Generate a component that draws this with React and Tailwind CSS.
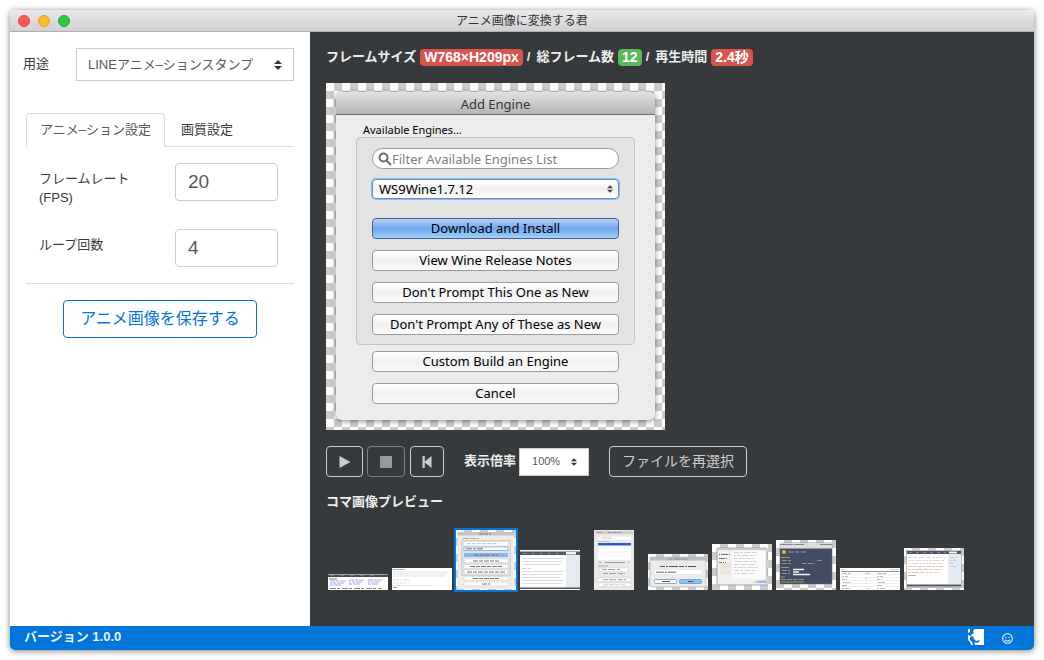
import { useState } from "react";
import { FaRegSmile } from "react-icons/fa";

const BORDER_BUTTON = "flex h-[31px] items-center justify-center rounded-[4px] border";

const SelectArrows = ({ className }) => (
    <svg viewBox="0 0 8 10" className={className} fill="currentColor" aria-hidden="true">
        <path d="M4 0 L8 4 H0 Z" />
        <path d="M4 10 L0 6 H8 Z" />
    </svg>
);

const TitleBar = () => (
    <header className="relative flex h-[22px] shrink-0 items-center justify-center border-b border-[#b1afb1] bg-linear-to-b from-[#ebe9eb] to-[#d1cfd1]">
        <div className="absolute left-2 flex gap-2">
            <button aria-label="閉じる" className="size-3 rounded-full border border-[#e0443e] bg-[#fc5b57]" />
            <button aria-label="最小化" className="size-3 rounded-full border border-[#dea123] bg-[#fdbe2e]" />
            <button aria-label="拡大" className="size-3 rounded-full border border-[#1aab29] bg-[#28c940]" />
        </div>
        <h1 className="text-[12px] text-[#333]">アニメ画像に変換する君</h1>
    </header>
);

const NumberField = ({ id, label, value, onChange }) => (
    <div className="flex h-[38px] items-start justify-between pr-4 pl-[13px]">
        <label htmlFor={id} className="pt-1.5 text-[13px] leading-[19px] whitespace-pre-line">
            {label}
        </label>
        <input
            id={id}
            type="text"
            inputMode="numeric"
            value={value}
            onChange={(e) => onChange(e.target.value)}
            className="h-[38px] w-[103px] rounded-[4px] border border-[#ccc] bg-white px-3 text-[19px] text-[#55595c]"
        />
    </div>
);

const Sidebar = () => {
    const [fps, setFps] = useState("20");
    const [loop, setLoop] = useState("4");

    return (
        <aside className="w-[300px] shrink-0 bg-white pt-4 pr-4 text-[13px] text-[#373a3c]">
            <div className="flex items-center pl-[13px]">
                <label htmlFor="usage" className="w-[53px] shrink-0 pb-0.5">用途</label>
                <div className="relative flex-1">
                    <select
                        id="usage"
                        className="h-[33px] w-full appearance-none border border-[#ccc] bg-white pr-8 pl-[11px] text-[#55595c]"
                    >
                        <option>LINEアニメ–ションスタンプ</option>
                        <option>webページアニメ–ション</option>
                    </select>
                    <SelectArrows className="pointer-events-none absolute top-3 right-3 h-2.5 w-2 text-[#333]" />
                </div>
            </div>

            <div className="mt-8 pl-4">
                <div role="tablist" className="flex h-[34px] border-b border-[#ddd]">
                    <button
                        role="tab"
                        aria-selected="true"
                        className="-mb-px h-[34px] rounded-t-[4px] border border-[#ddd] border-b-white bg-white px-[13px] text-[#55595c]"
                    >
                        アニメ–ション設定
                    </button>
                    <button role="tab" aria-selected="false" className="px-4">
                        画質設定
                    </button>
                </div>

                <div className="mt-4 flex flex-col gap-7 border-b border-[#ddd] pb-4">
                    <NumberField id="fps" label={"フレームレート\n(FPS)"} value={fps} onChange={setFps} />
                    <NumberField id="loop" label="ループ回数" value={loop} onChange={setLoop} />
                </div>

                <div className="mt-4 flex justify-center">
                    <button className="h-[38px] rounded-[4px] border border-[#0275d8] px-4 text-[16px] text-[#0275d8]">
                        アニメ画像を保存する
                    </button>
                </div>
            </div>
        </aside>
    );
};

const Badge = ({ className, children }) => (
    <span className={`rounded-[4px] px-1 text-[14px] leading-[17px] font-bold text-white ${className}`}>
        {children}
    </span>
);

const EngineButton = ({ primary, children }) => (
    <button
        className={
            primary
                ? "h-[21px] rounded-[4px] border border-[#4a5c9c] bg-linear-to-b from-[#b9d0f3] via-[#6fa6ee] to-[#a4d2fb] leading-[19px]"
                : "h-[21px] rounded-[4px] border border-[#9a9a9a] bg-linear-to-b from-white via-[#f0f0f0] to-[#fbfbfb] leading-[19px]"
        }
    >
        {children}
    </button>
);

const FramePreview = () => (
    <div className="w-[339px] bg-[conic-gradient(#cbcbcb_25%,#fff_0_50%,#cbcbcb_0_75%,#fff_0)] bg-[length:16px_16px] px-2.5 pt-[9px] pb-2.5">
        <div className="h-[328px] overflow-hidden rounded-[6px] bg-[#ececec] font-['Noto_Sans','Open_Sans',sans-serif] text-[13px] text-black shadow-[0_1px_5px_rgba(0,0,0,0.5)]">
            <div className="h-[23px] border-b border-[#6e6e6e] bg-linear-to-b from-[#e2e2e2] to-[#b4b4b4] text-center leading-6 text-[#333]">
                Add Engine
            </div>
            <div className="px-5 pt-[7px]">
                <div className="pl-[7px] text-[11px] leading-[15px]">Available Engines…</div>
                <div className="flex flex-col gap-[11px] rounded-[4px] border border-[#c4c4c4] bg-[#e3e3e3] px-[15px] pt-2.5 pb-[9px]">
                    <div className="relative">
                        <svg viewBox="0 0 14 14" className="absolute top-1 left-1.5 size-3.5" fill="none" stroke="#6b6b6b" strokeWidth="2" aria-hidden="true">
                            <circle cx="5.5" cy="5.5" r="4" />
                            <path d="M8.5 8.5 L13 13" />
                        </svg>
                        <input
                            type="text"
                            aria-label="Filter Available Engines List"
                            placeholder="Filter Available Engines List"
                            className="block h-[21px] w-full rounded-full border border-[#999] bg-white pl-[19px] placeholder:text-[#808080]"
                        />
                    </div>
                    <div className="relative -mt-px mb-2">
                        <select
                            aria-label="Engine"
                            className="block h-5 w-full appearance-none rounded-[4px] border border-[#5b93d0] bg-linear-to-b from-white via-[#efefef] to-white pl-1.5 leading-[18px] ring-1 ring-[#8fb9e6]"
                        >
                            <option>WS9Wine1.7.12</option>
                        </select>
                        <SelectArrows className="pointer-events-none absolute top-[5px] right-1.5 h-2.5 w-1.5 text-[#444]" />
                    </div>
                    <EngineButton primary>Download and Install</EngineButton>
                    <EngineButton>View Wine Release Notes</EngineButton>
                    <EngineButton>Don't Prompt This One as New</EngineButton>
                    <EngineButton>Don't Prompt Any of These as New</EngineButton>
                </div>
                <div className="mt-1.5 flex flex-col gap-[11px] px-4">
                    <EngineButton>Custom Build an Engine</EngineButton>
                    <EngineButton>Cancel</EngineButton>
                </div>
            </div>
        </div>
    </div>
);

const PlayerControls = () => (
    <div className="mt-4 flex items-center">
        <button aria-label="再生" className={`${BORDER_BUTTON} w-[37px] border-[#ccc]`}>
            <svg viewBox="0 0 12 12" className="size-3" fill="#ccc">
                <path d="M0.5 0 L11.5 6 L0.5 12 Z" />
            </svg>
        </button>
        <button aria-label="停止" disabled className={`${BORDER_BUTTON} ml-1 w-[38px] border-[#7d7f80]`}>
            <svg viewBox="0 0 12 12" className="size-3" fill="#999">
                <path d="M0 0 H12 V12 H0 Z" />
            </svg>
        </button>
        <button aria-label="最初に戻る" className={`${BORDER_BUTTON} ml-[5px] w-[34px] border-[#ccc]`}>
            <svg viewBox="0 0 10 12" className="h-3 w-2.5" fill="#ccc">
                <path d="M0.5 0 H2.8 V5.6 L9.5 0 V12 L2.8 6.4 V12 H0.5 Z" />
            </svg>
        </button>
        <label htmlFor="zoom" className="ml-5 pb-0.5 text-[13px] font-bold">表示倍率</label>
        <div className="relative ml-[3px]">
            <select
                id="zoom"
                className="block h-7 w-[70px] appearance-none border border-[#ccc] bg-white pl-3 text-[11px] text-[#55595c]"
            >
                <option>100%</option>
                <option>50%</option>
            </select>
            <SelectArrows className="pointer-events-none absolute top-2.5 right-3 h-2 w-1.5 text-[#333]" />
        </div>
        <button className={`${BORDER_BUTTON} ml-5 border-[#ccc] px-3 text-[14px] text-[#ccc]`}>
            ファイルを再選択
        </button>
    </div>
);

// rows of short strokes that stand for text at thumbnail size
const Rows = ({ x, y, width, count, step = 3, color = "#ccc", dash = "5 1 3 1 7 1" }) =>
    Array.from({ length: count }, (_, i) => (
        <path
            key={i}
            d={`M${x} ${y + i * step} h${width - ((i * 7) % 5)}`}
            stroke={color}
            strokeWidth="0.8"
            strokeDasharray={dash}
            strokeDashoffset={i * 3}
        />
    ));

const THUMBS = [
    {
        width: 60,
        height: 16,
        art: (
            <>
                <path d="M0 0 H60 V16 H0 Z" fill="#fff" />
                <path d="M0 0.5 H60 V3 H0 Z" fill="#4a4a4e" />
                <path d="M2 1.5 H50" stroke="#777" strokeDasharray="4 6" />
                <path d="M1 5 H9" stroke="#555" strokeWidth="0.8" />
                <Rows x={2} y={7} width={16} count={3} step={2} color="#9090ee" />
                <Rows x={21} y={6} width={15} count={3} step={2} color="#9090ee" />
                <Rows x={40} y={6} width={14} count={3} step={2} color="#9090ee" />
                <path d="M2 14.5 H54" stroke="#666" strokeWidth="0.8" strokeDasharray="6 1 3 2" />
            </>
        ),
    },
    {
        width: 60,
        height: 22,
        art: (
            <>
                <path d="M0 0 H60 V22 H0 Z" fill="#fff" />
                <path d="M1 1.5 H13" stroke="#999" strokeWidth="0.8" />
                <Rows x={1} y={4} width={56} count={3} step={2} color="#dcdcdc" dash="none" />
                <Rows x={1} y={12} width={18} count={2} step={3} color="#d4d4d4" />
                <path d="M1 17.5 H40" stroke="#e4e4e4" />
                <path d="M1 19.5 H5" stroke="#999" />
            </>
        ),
    },
    {
        width: 60,
        height: 60,
        checker: true,
        art: (
            <>
                <rect x="1.5" y="2" width="57" height="57" rx="1" fill="#ececec" />
                <path d="M1.5 2 H58.5 V5.5 H1.5 Z" fill="#c4c4c4" />
                <path d="M23 4 H35" stroke="#777" strokeWidth="0.9" strokeDasharray="4 1" />
                <path d="M7 8.5 H23" stroke="#999" strokeWidth="0.8" strokeDasharray="6 1" />
                <rect x="5.5" y="10.5" width="49" height="35" fill="#e2e2e2" stroke="#d0d0d0" />
                <rect x="8" y="12" width="44" height="3.5" rx="1.5" fill="#fff" />
                <path d="M11 13.7 H42" stroke="#bbb" strokeWidth="0.9" strokeDasharray="4 1" />
                <rect x="8" y="17" width="44" height="3.5" fill="#fff" stroke="#8fb9e0" />
                <path d="M10 18.8 H27" stroke="#556" strokeWidth="0.9" strokeDasharray="6 1 3 1" />
                <path d="M8 23 H52 V27 H8 Z" fill="#8ab4ee" />
                {[29, 34.5, 40, 46.5, 52].map((y) => (
                    <path key={y} d={`M8 ${y} h44 v3.8 h-44 Z`} fill="#fff" stroke="#ccc" strokeWidth="0.5" />
                ))}
                <path d="M18 25 H42 M17 31 H43 M14 36.5 H46 M11 42 H49 M17 48.5 H43 M26 54 H34" stroke="#777" strokeDasharray="5 1 4 1" />
            </>
        ),
    },
    {
        width: 60,
        height: 40,
        art: (
            <>
                <path d="M0 0 H60 V40 H0 Z" fill="#fff" />
                <path d="M0 1.5 H60 V5 H0 Z" fill="#4b5563" />
                <path d="M3 3.5 H44" stroke="#7d8794" strokeDasharray="4 4" />
                <path d="M46 2 H56 V4.5 H46 Z" fill="#f4f4f4" />
                <path d="M46 5 H60 V38 H46 Z" fill="#e6ebf2" />
                <Rows x={2} y={8.5} width={42} count={3} color="#d4d4d4" dash="none" />
                <Rows x={2} y={18.5} width={10} count={1} />
                <Rows x={2} y={21.5} width={42} count={5} color="#d4d4d4" dash="none" />
                <path d="M0 37.5 H60 V39 H0 Z" fill="#4b5563" />
            </>
        ),
    },
    {
        width: 40,
        height: 60,
        art: (
            <>
                <path d="M0 0 H40 V60 H0 Z" fill="#e9e9e9" />
                <path d="M1 1 H39 V4 H1 Z" fill="#cfcfcf" />
                <path d="M3 2.5 H8" stroke="#e48a7c" />
                <path d="M14 2.5 H27" stroke="#888" strokeWidth="0.8" strokeDasharray="4 1" />
                <path d="M4 6.5 H37 V9.5 H4 Z" fill="#fff" />
                <path d="M7 8 H18 M4 11.5 H16" stroke="#bbb" strokeWidth="0.8" />
                <path d="M4 13 H37 V30 H4 Z" fill="#fff" />
                <path d="M4 13 H37 V15.5 H4 Z" fill="#315bc0" />
                <path d="M4 18 H37 M4 22 H37 M4 26 H37" stroke="#eef3fb" />
                <path d="M5 32.5 H35" stroke="#888" strokeWidth="0.8" strokeDasharray="2 4 20 3" />
                <path d="M4 36 H14" stroke="#999" strokeWidth="0.8" />
                <path d="M6 38 H34 V41.5 H6 Z M4 48 H37 V51.5 H4 Z M4 53 H37 V56.5 H4 Z" fill="#fff" stroke="#ccc" strokeWidth="0.5" />
                <path d="M8 39.5 H26 M9 43.5 H31 M9 49.7 H32" stroke="#888" strokeWidth="0.8" strokeDasharray="5 1 7 2" />
                <path d="M9 54.7 H31" stroke="#c4c4c4" strokeWidth="0.8" strokeDasharray="5 1" />
            </>
        ),
    },
    {
        width: 60,
        height: 36,
        checker: true,
        art: (
            <>
                <rect x="2" y="3" width="56" height="30" rx="1" fill="#ececec" stroke="#999" strokeWidth="0.5" />
                <path d="M2 3 H58 V6.5 H2 Z" fill="#bdbdbd" />
                <path d="M20 5 H40" stroke="#888" strokeWidth="0.9" strokeDasharray="4 1 8 1" />
                <path d="M12 12.5 H48" stroke="#555" strokeDasharray="5 1 2 1 9 1" />
                <path d="M7 16 H53 V20 H7 Z" fill="#fff" />
                <path d="M8 18.2 H28" stroke="#666" strokeDasharray="8 1 2 1" />
                <rect x="6.5" y="25.5" width="22" height="4" rx="1" fill="#fff" stroke="#8aa9cc" />
                <rect x="31.5" y="25.5" width="22" height="4" rx="1" fill="#8dbcf3" stroke="#7aa5dc" />
                <path d="M14 27.5 H22 M40 27.5 H45" stroke="#555" />
            </>
        ),
    },
    {
        width: 60,
        height: 46,
        checker: true,
        art: (
            <>
                <rect x="5" y="4" width="50" height="37" rx="1" fill="#f0f0f0" stroke="#888" strokeWidth="0.7" />
                <path d="M5 4 H55 V6 H5 Z" fill="#c6c6c6" />
                <path d="M20 6.5 H53 V35 H20 Z" fill="#fafafa" />
                <path d="M8 19 H19 V31 H8 Z" fill="#ece5da" />
                <Rows x={7} y={10.5} width={11} count={3} step={4} color="#555" dash="1 1 7 1" />
                <Rows x={22} y={8.5} width={24} count={8} step={3} color="#ccc" />
                <path d="M43 38 H47" stroke="#999" />
                <path d="M46 36.5 H54 V39 H46 Z" fill="#8dbcf3" />
            </>
        ),
    },
    {
        width: 60,
        height: 50,
        checker: true,
        art: (
            <>
                <rect x="4" y="3" width="52" height="41" rx="1" fill="#434c64" stroke="#666" strokeWidth="0.5" />
                <path d="M4 3 H56 V8.5 H4 Z" fill="#dcdcdc" />
                <path d="M4 4.5 H56" stroke="#888" strokeDasharray="13 1 10 16" />
                <circle cx="8" cy="12" r="2" fill="#d8c431" />
                <path d="M12 12 H30" stroke="#aab0c0" strokeWidth="0.8" strokeDasharray="6 1 4 2" />
                <path d="M5 17.5 H14 M5 27.5 H13 M5 37 H9 M5 42 H28" stroke="#c4b637" strokeWidth="0.8" />
                <path d="M6 20.5 H15 M41 20.5 H47 M6 23.5 H15 M26 23.5 H39 M6 30.5 H14 M6 33.5 H14 M5 39.5 H28" stroke="#9da4b5" strokeWidth="0.8" strokeDasharray="5 1" />
                <path d="M17 29.5 H28 M17 32 H23 M17 34.5 H34" stroke="#f4f4f4" strokeWidth="1.3" />
            </>
        ),
    },
    {
        width: 60,
        height: 22,
        art: (
            <>
                <path d="M0 0 H60 V22 H0 Z" fill="#fff" />
                <path d="M1 1.5 H4 M50 1.5 H58" stroke="#ccc" strokeWidth="0.8" />
                <path d="M1 3.5 H59" stroke="#777" strokeWidth="0.8" />
                <path d="M0 6.5 H60 M0 9.5 H60 M0 12.5 H60 M0 15.5 H60 M0 18.5 H60" stroke="#e6e6e6" strokeWidth="0.6" />
                <Rows x={2} y={5.5} width={9} count={6} color="#aaa" />
                <Rows x={25} y={5.5} width={5} count={4} step={5} color="#bbb" />
                <Rows x={37} y={5.5} width={9} count={6} color="#aaa" />
            </>
        ),
    },
    {
        width: 60,
        height: 42,
        checker: true,
        art: (
            <>
                <rect x="2.5" y="2.5" width="55" height="37" fill="#fff" stroke="#999" strokeWidth="0.6" />
                <path d="M3 3 H57 V6 H3 Z" fill="#4b5563" />
                <path d="M5 4.5 H42" stroke="#7d8794" strokeDasharray="3 4" />
                <path d="M45 3.5 H53 V5.5 H45 Z" fill="#f4f4f4" />
                <path d="M44 6 H57 V36 H44 Z" fill="#e4eaf3" />
                <Rows x={4} y={9.5} width={38} count={3} color="#e0cccc" />
                <Rows x={4} y={18.5} width={36} count={3} color="#ecb4b4" />
                <path d="M4 27.5 H12" stroke="#e88080" strokeWidth="0.8" />
                <Rows x={46} y={9.5} width={8} count={4} color="#b4cfd1" />
                <path d="M3 36.5 H57 V38.5 H3 Z" fill="#4b5563" />
            </>
        ),
    },
];

const Thumbnail = ({ thumb, selected, onClick, label }) => (
    <button
        onClick={onClick}
        aria-label={label}
        className={`flex w-16 shrink-0 justify-center border-2 ${selected ? "border-[#0275d8]" : "border-transparent"}`}
    >
        <svg
            viewBox={`0 0 ${thumb.width} ${thumb.height}`}
            width={thumb.width}
            height={thumb.height}
            fill="none"
            className={
                thumb.checker
                    ? "block bg-[conic-gradient(#cbcbcb_25%,#fff_0_50%,#cbcbcb_0_75%,#fff_0)] bg-[length:16px_16px]"
                    : "block"
            }
        >
            {thumb.art}
        </svg>
    </button>
);

const Workspace = () => {
    const [current, setCurrent] = useState(2);

    return (
        <main className="min-w-0 flex-1 bg-[#373a3c] pt-[15px] pl-4 text-[#eceeef]">
            <div className="flex h-5 items-center gap-1 text-[13px] font-bold">
                <span>フレームサイズ</span>
                <Badge className="bg-[#d9534f]">W768×H209px</Badge>
                <span className="mr-0.5">/</span>
                <span>総フレーム数</span>
                <Badge className="bg-[#5cb85c]">12</Badge>
                <span className="mr-0.5">/</span>
                <span>再生時間</span>
                <Badge className="bg-[#d9534f]">2.4秒</Badge>
            </div>
            <div className="mt-4">
                <FramePreview />
            </div>
            <PlayerControls />
            <h2 className="mt-[15px] text-[13px] leading-5 font-bold">コマ画像プレビュー</h2>
            <div className="mt-4 flex items-end">
                {THUMBS.map((thumb, i) => (
                    <Thumbnail
                        key={i}
                        thumb={thumb}
                        label={`フレーム ${i + 1}`}
                        selected={i === current}
                        onClick={() => setCurrent(i)}
                    />
                ))}
            </div>
        </main>
    );
};

const StatusBar = () => (
    <footer className="flex h-6 shrink-0 items-center justify-between bg-[#0275d8] pr-[21px] pl-3.5 text-[13px] font-bold text-[#e6f1fb]">
        <span className="pb-0.5">バージョン 1.0.0</span>
        <div className="flex items-center gap-[18px]">
            <a href="#site" aria-label="サイト">
                <svg viewBox="0 0 16 16" className="-mt-0.5 block size-4">
                    <path d="M0 0 H16 V16 H0 Z" fill="#fff" />
                    <path d="M2 0 H7 L5 2 L6 4 L4 5 L3 7 L0 6 V4 L2 3 Z" fill="#0275d8" />
                    <path d="M2 8 L5 7 L6 10 L8 12 L12 11 L11 13 L8 14 L6 13 L7 16 H5 L4 13 L2 11 Z" fill="#0275d8" />
                    <path d="M0 11 L2 13 L3 16 H0 Z" fill="#0275d8" />
                </svg>
            </a>
            <a href="#feedback" aria-label="フィードバック">
                <FaRegSmile className="size-[11px]" />
            </a>
        </div>
    </footer>
);

const App = () => (
    <div className="flex min-h-screen bg-white p-2.5 font-['Liberation_Sans','Noto_Sans_CJK_JP',sans-serif]">
        <div className="flex min-w-0 flex-1 flex-col overflow-hidden rounded-[5px] shadow-[0_1px_6px_rgba(0,0,0,0.5)]">
            <TitleBar />
            <div className="flex flex-1">
                <Sidebar />
                <Workspace />
            </div>
            <StatusBar />
        </div>
    </div>
);

export default App;
